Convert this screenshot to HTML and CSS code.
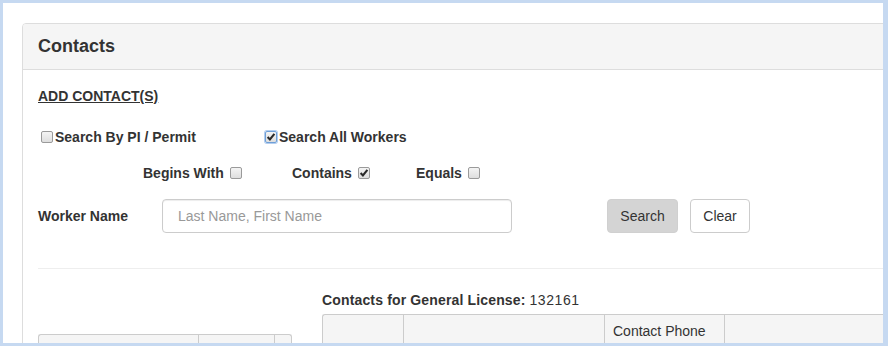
FILE: index.html
```html
<!DOCTYPE html>
<html lang="en">
<head>
<meta charset="utf-8">
<title>Contacts</title>
<link rel="stylesheet" href="styles.css">
</head>
<body>
<div class="frame">
  <div class="panel">
    <div class="panel-heading">
      <h3 class="panel-title">Contacts</h3>
    </div>
    <div class="panel-body">
      <div class="add-row"><a class="add-link" href="#">ADD CONTACT(S)</a></div>

      <div class="row-search">
        <label class="chk"><span class="cb"></span>Search By PI / Permit</label>
        <label class="chk"><span class="cb focus"><svg class="tick" viewBox="0 0 12 12" width="12" height="12"><path d="M2.6 6.1 L4.9 8.4 L9.4 2.9" /></svg></span>Search All Workers</label>
      </div>

      <div class="row-match">
        <label class="chk-r">Begins With<span class="cb"></span></label>
        <label class="chk-r">Contains<span class="cb"><svg class="tick" viewBox="0 0 12 12" width="12" height="12"><path d="M2.6 6.1 L4.9 8.4 L9.4 2.9" /></svg></span></label>
        <label class="chk-r">Equals<span class="cb"></span></label>
      </div>

      <div class="row-worker">
        <label class="worker-label" for="worker">Worker Name</label>
        <input class="form-input" id="worker" type="text" placeholder="Last Name, First Name">
        <button class="btn btn-search" type="button">Search</button>
        <button class="btn btn-clear" type="button">Clear</button>
      </div>

      <div class="divider"></div>

      <div class="results">
        <div class="left-col">
          <div class="thead thead-left">
            <div class="th w160"></div>
            <div class="th w76"></div>
            <div class="th w18 last"></div>
          </div>
        </div>
        <div class="right-col">
          <div class="lic-heading"><strong class="lic-label">Contacts for General License:</strong> <span class="lic-num">132161</span></div>
          <div class="thead thead-right">
            <div class="th w81"></div>
            <div class="th w201"></div>
            <div class="th w120">Contact Phone</div>
            <div class="th w300"></div>
          </div>
        </div>
      </div>
    </div>
  </div>
</div>
</body>
</html>
```

FILE: styles.css
```css
html, body {
  margin: 0;
  padding: 0;
  background: #ffffff;
}

body {
  font-family: "Liberation Sans", Arial, sans-serif;
  font-size: 14px;
  line-height: 20px;
  color: #333333;
}

.frame {
  width: 888px;
  height: 346px;
  box-sizing: border-box;
  border: 3px solid #c6d9f1;
  border-right-width: 5px;
  background: #ffffff;
  overflow: hidden;
  padding: 20px 0 0 19px;
}

.panel {
  width: 1000px;
  border: 1px solid #dddddd;
  border-radius: 4px;
  background: #ffffff;
}

.panel-heading {
  background: #f5f5f5;
  border-bottom: 1px solid #dddddd;
  border-radius: 3px 3px 0 0;
  padding: 10px 15px;
}

.panel-title {
  margin: 0;
  font-size: 18px;
  font-weight: bold;
  line-height: 25px;
  color: #333333;
}

.panel-body {
  padding: 16px 15px 20px 15px;
}

.add-row {
  height: 20px;
}

.add-link {
  color: #333333;
  font-weight: bold;
  text-decoration: underline;
}

.row-search {
  margin-top: 21px;
  height: 20px;
  display: grid;
  grid-template-columns: 224px auto;
}

.chk {
  display: flex;
  align-items: center;
  font-weight: bold;
}

.chk .cb {
  margin: 0 2px 0 3px;
}

.row-match {
  margin-top: 16px;
  height: 20px;
  padding-left: 105px;
  display: grid;
  grid-template-columns: 149px 124px auto;
}

.chk-r {
  display: flex;
  align-items: center;
  font-weight: bold;
}

.chk-r .cb {
  margin-left: 6px;
}

.cb {
  width: 12px;
  height: 12px;
  box-sizing: border-box;
  border: 1px solid #9a9a9a;
  border-radius: 2px;
  background: linear-gradient(#f4f4f4, #dedede);
  display: inline-flex;
  flex: none;
}

.cb.focus {
  border-color: #6e9fd8;
  box-shadow: 0 0 0 1px #b3cdee;
}

.tick {
  display: block;
  margin: -1px;
  fill: none;
  stroke: #2a2a2a;
  stroke-width: 2.1;
}

.row-worker {
  margin-top: 16px;
  display: flex;
  align-items: center;
  height: 34px;
}

.worker-label {
  width: 124px;
  font-weight: bold;
}

.form-input {
  width: 350px;
  height: 34px;
  box-sizing: border-box;
  border: 1px solid #cccccc;
  border-radius: 4px;
  padding: 6px 12px 6px 15px;
  font-family: "Liberation Sans", Arial, sans-serif;
  font-size: 14px;
  color: #555555;
  box-shadow: inset 0 1px 1px rgba(0, 0, 0, 0.075);
  margin: 0;
}

.form-input::placeholder {
  color: #999999;
}

.btn {
  height: 34px;
  box-sizing: border-box;
  border-radius: 4px;
  padding: 6px 0;
  font-family: "Liberation Sans", Arial, sans-serif;
  font-size: 14px;
  line-height: 20px;
  color: #333333;
  margin: 0;
  text-align: center;
}

.btn-search {
  width: 71px;
  margin-left: 95px;
  background: #d4d4d4;
  border: 1px solid #d0d0d0;
}

.btn-clear {
  width: 60px;
  margin-left: 12px;
  background: #ffffff;
  border: 1px solid #cccccc;
}

.divider {
  margin: 35px 0 21px 0;
  border-top: 1px solid #eeeeee;
}

.results {
  display: flex;
  align-items: flex-start;
}

.left-col {
  width: 254px;
  padding-top: 44px;
  margin-right: 30px;
}

.right-col {
  flex: 1;
}

.lic-heading {
  height: 20px;
}

.lic-label {
  letter-spacing: 0.15px;
}

.lic-num {
  letter-spacing: 0.6px;
}

.thead {
  display: flex;
}

.thead-right {
  margin-top: 4px;
}

.th {
  box-sizing: border-box;
  height: 40px;
  background: #f5f5f5;
  border-top: 1px solid #cccccc;
  border-left: 1px solid #cccccc;
  padding: 6px 8px;
  flex: none;
}

.th:first-child {
  border-top-left-radius: 3px;
}

.th.last {
  border-right: 1px solid #cccccc;
  border-top-right-radius: 3px;
}

.w160 { width: 160px; }
.w76 { width: 76px; }
.w18 { width: 18px; }
.w81 { width: 81px; }
.w201 { width: 201px; }
.w120 { width: 120px; }
.w300 { width: 300px; }
```
